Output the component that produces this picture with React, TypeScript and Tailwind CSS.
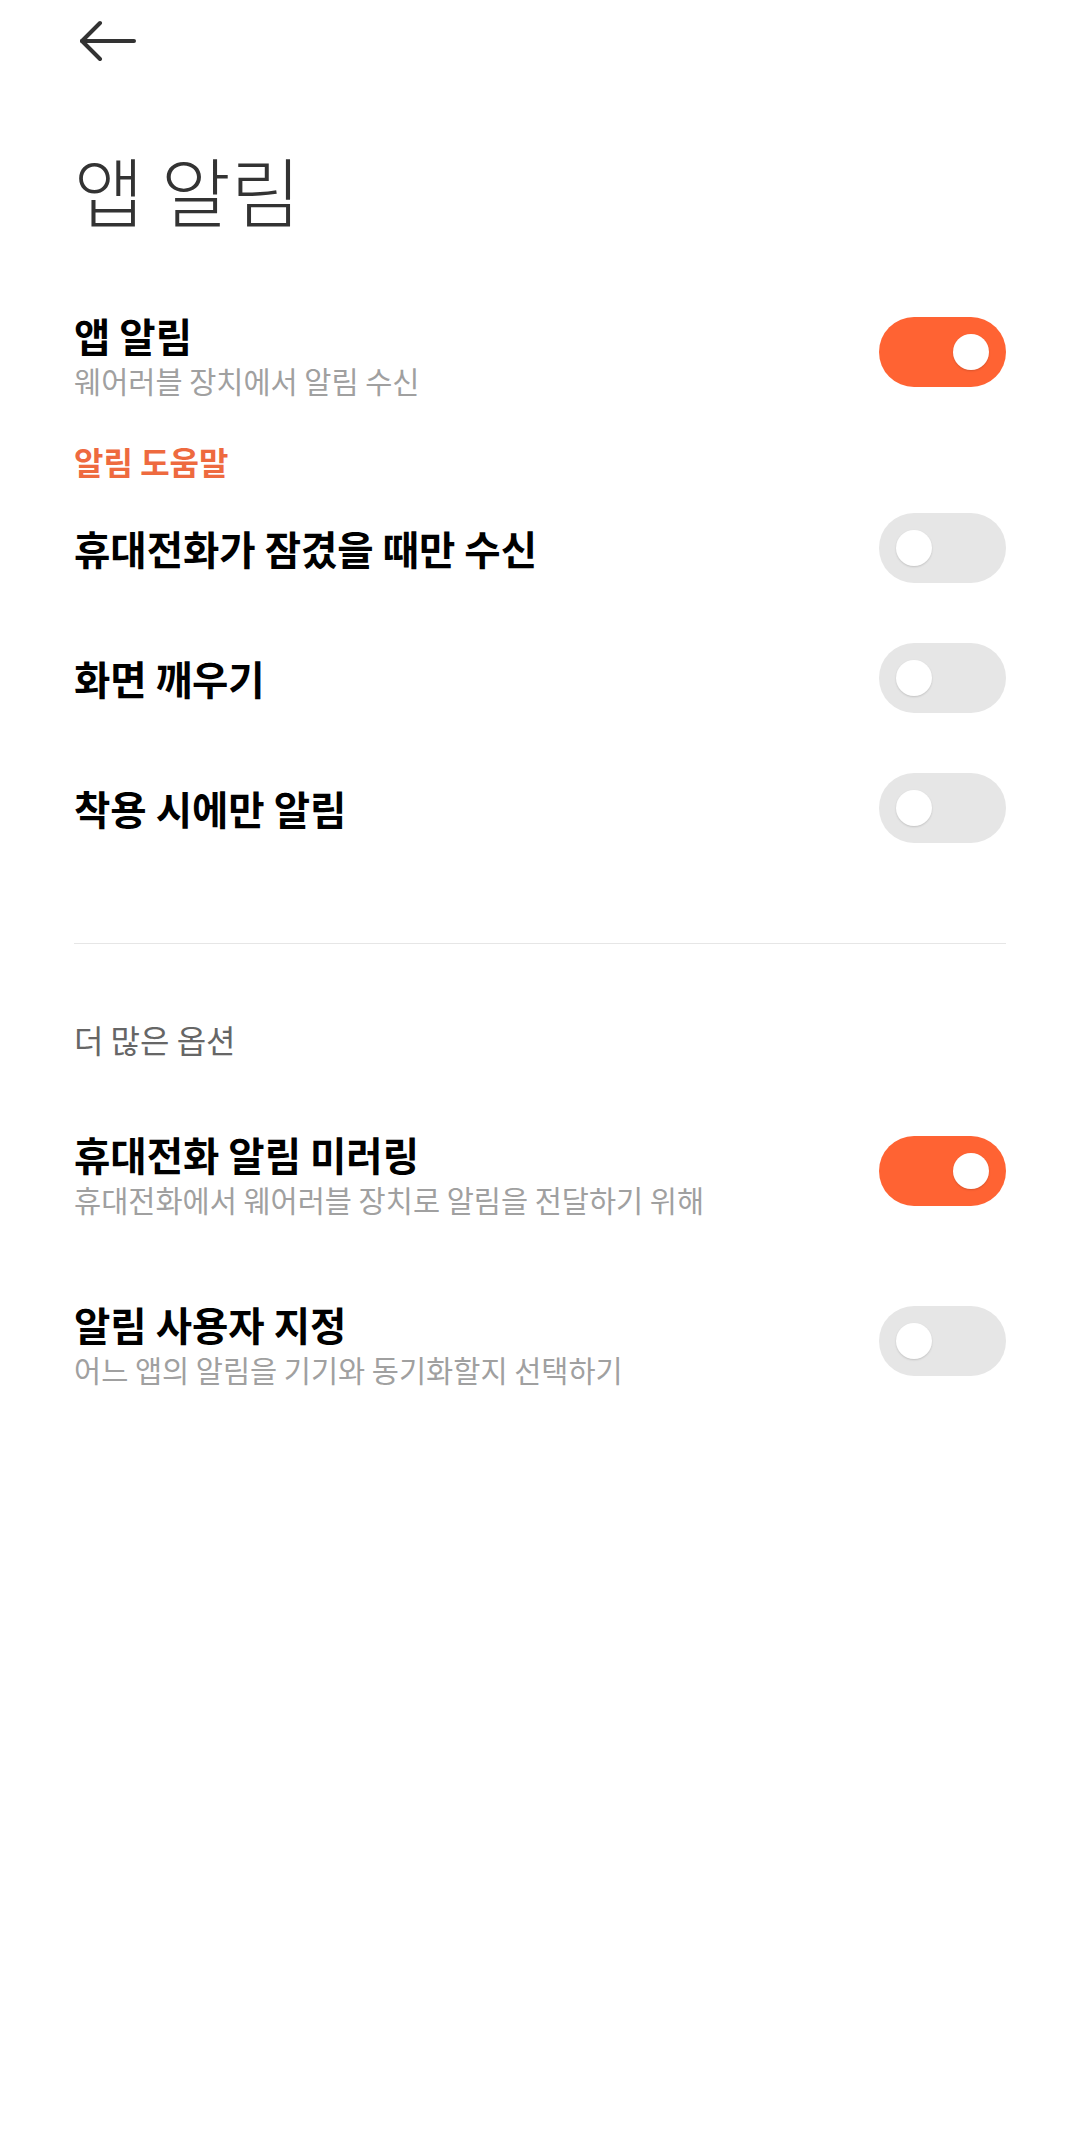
import React from 'react';

const Toggle: React.FC<{ on?: boolean }> = ({ on }) => (
  <div
    className={
      on
        ? 'w-[127px] h-[70px] shrink-0 rounded-full bg-[#ff6333] flex items-center justify-end pr-[17px]'
        : 'w-[127px] h-[70px] shrink-0 rounded-full bg-[#e6e6e6] flex items-center justify-start pl-[17px]'
    }
  >
    <div className="w-[36px] h-[36px] rounded-full bg-white shadow-[0_1px_2px_rgba(0,0,0,0.15)]"></div>
  </div>
);

const Row: React.FC<{ title: string; sub?: string; on?: boolean; h: string }> = ({ title, sub, on, h }) => (
  <div className={`${h} flex items-center justify-between`}>
    <div className={sub ? 'flex flex-col pt-[7px]' : 'flex flex-col'}>
      <span className="text-[39.5px] leading-[44px] font-bold text-black">{title}</span>
      {sub && <span className="mt-[5px] text-[29.5px] leading-[36px] text-[#a0a0a0]">{sub}</span>}
    </div>
    <Toggle on={on} />
  </div>
);

export default function App() {
  return (
    <div className="w-[1080px] min-h-[2152px] bg-white font-['Noto_Sans_CJK_KR',sans-serif]">
      <div className="h-[82px] flex items-center pl-[80px]">
        <svg width="60" height="44" viewBox="0 0 60 44" fill="none" stroke="#333" strokeWidth="4" strokeLinecap="round" strokeLinejoin="round">
          <path d="M2 22 H54" />
          <path d="M20 4 L2 22 L20 40" />
        </svg>
      </div>
      <div className="px-[74px]">
        <div className="h-[214px] flex items-center">
          <h1 className="text-[76px] leading-none font-light text-[#333]">앱 알림</h1>
        </div>
        <Row h="h-[112px]" title="앱 알림" sub="웨어러블 장치에서 알림 수신" on />
        <div className="h-[75px] pt-[30px] flex items-center">
          <span className="text-[32px] leading-none font-bold text-[#ee6a3f]">알림 도움말</span>
        </div>
        <Row h="h-[130px]" title="휴대전화가 잠겼을 때만 수신" />
        <Row h="h-[130px]" title="화면 깨우기" />
        <Row h="h-[130px]" title="착용 시에만 알림" />
        <div className="mt-[70px] border-t border-[#e6e6e6]"></div>
        <div className="h-[142px] pt-[48px] flex items-center">
          <span className="text-[32px] leading-none text-[#666]">더 많은 옵션</span>
        </div>
        <Row h="h-[170px]" title="휴대전화 알림 미러링" sub="휴대전화에서 웨어러블 장치로 알림을 전달하기 위해" on />
        <Row h="h-[170px]" title="알림 사용자 지정" sub="어느 앱의 알림을 기기와 동기화할지 선택하기" />
      </div>
    </div>
  );
}
